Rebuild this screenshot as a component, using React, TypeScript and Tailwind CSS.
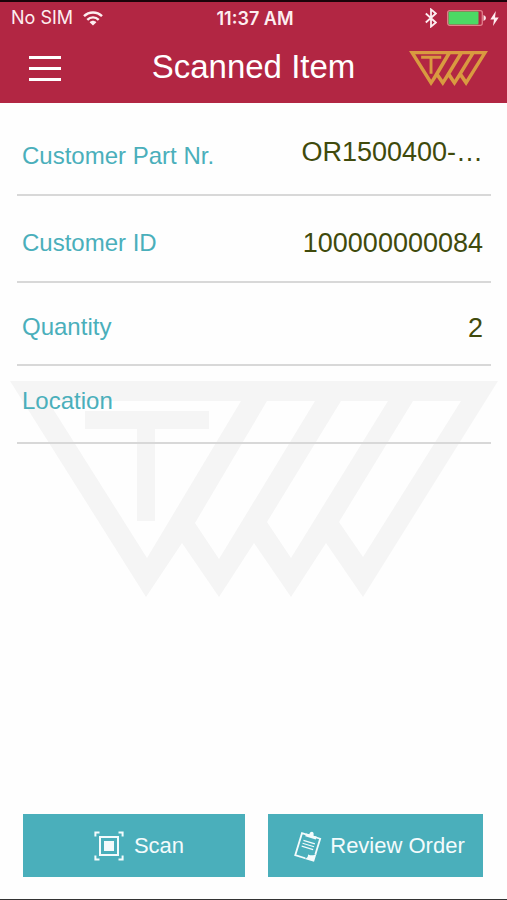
import React, { useState } from 'react';

interface LogoProps {
  className?: string;
}

const Logo: React.FC<LogoProps> = ({ className }) => (
  <svg viewBox="0 0 488 216" className={className} fill="currentColor" aria-hidden="true">
    <path
      fillRule="evenodd"
      d="M0 0H488L353 216L316 162L281 216L244 162L209 216L172 162L136 216Z
         M38 20L137 177L231 20Z
         M257 20L185 142L209 178L305 20Z
         M331 20L257 141L281 177L378 20Z
         M403 20L329 141L353 176L451 20Z"
    />
    <path d="M75 30H199V48H145V140H127V48H75Z" />
  </svg>
);

const WifiIcon = () => (
  <svg viewBox="0 0 20 15" className="h-[15px] w-5" fill="none" stroke="currentColor" strokeWidth="2.4" aria-hidden="true">
    <path d="M1 5.2C6 .2 14 .2 19 5.2" />
    <path d="M4.3 8.8C7.5 5.6 12.5 5.6 15.7 8.8" />
    <path d="M6.6 11.2C8.6 9.2 11.4 9.2 13.4 11.2L10 14.6Z" fill="currentColor" stroke="none" />
  </svg>
);

const BluetoothIcon = () => (
  <svg viewBox="0 0 12 20" className="h-5 w-3" fill="none" stroke="currentColor" strokeWidth="1.8" aria-hidden="true">
    <path d="M.8 5.5L10.8 14.5L6 18.6V1.4L10.8 5.5L.8 14.5" />
  </svg>
);

const BatteryIcon = () => (
  <svg viewBox="0 0 39 16" className="h-4 w-[39px]" aria-hidden="true">
    <rect x=".7" y=".7" width="34.6" height="14.6" rx="2" fill="none" stroke="#e27f8d" strokeWidth="1.3" />
    <rect x="1.5" y="1.5" width="30" height="13" rx="1" fill="#4cd964" />
    <path d="M36.5 5Q39 6 39 8T36.5 11Z" fill="#fbe4e7" />
  </svg>
);

const BoltIcon = () => (
  <svg viewBox="0 0 9 15" className="h-[15px] w-[9px]" fill="currentColor" aria-hidden="true">
    <path d="M5.8 0L.3 8.4H4L3 15L8.7 6.4H5Z" />
  </svg>
);

const ScanIcon = () => (
  <svg viewBox="0 0 30 30" className="size-[30px]" fill="none" stroke="currentColor" strokeWidth="2" aria-hidden="true">
    <path d="M1.4 5.5V1.4H5.5M24.5 1.4H28.6V5.5M28.6 24.5V28.6H24.5M5.5 28.6H1.4V24.5" />
    <rect x="6" y="6" width="18" height="18" />
    <rect x="10" y="10" width="10" height="10" fill="currentColor" stroke="none" />
  </svg>
);

const ClipboardIcon = () => (
  <svg viewBox="0 0 28 32" className="h-8 w-7" fill="none" stroke="currentColor" strokeWidth="1.8" aria-hidden="true">
    <g transform="rotate(17 14 16)">
      <path d="M15 28.5H4.5V5.5H23.5V22" />
      <path d="M8.5 7.5V4.5H11.8C11.8 .2 16.2 .2 16.2 4.5H19.5V7.5Z" fill="currentColor" stroke="none" />
      <path d="M8 12H20M8 15H20M8 18H20" strokeWidth="1.2" />
      <path d="M24.4 21V29.4H13C16 28.5 17.5 27 16.5 24C20 24.5 22.5 23.5 24.4 21Z" fill="currentColor" stroke="none" />
    </g>
  </svg>
);

const details = [
  { label: 'Customer Part Nr.', value: 'OR1500400-…', row: 'h-[93px]', space: 'pb-7' },
  { label: 'Customer ID', value: '100000000084', row: 'h-[87px]', space: 'pb-6' },
];

const App = () => {
  const [quantity, setQuantity] = useState('2');
  const [location, setLocation] = useState('');

  return (
    <div className="flex min-h-screen flex-col border-t-2 border-b border-t-[#1b0309] border-b-[#333333] bg-[#fefefe] font-['Liberation_Sans',Arial,sans-serif]">
      <header className="bg-[#b22643] text-white">
        {/* Status bar */}
        <div className="grid h-8 grid-cols-[1fr_auto_1fr] items-center pr-2 pl-[11px] font-['Inter','Liberation_Sans',sans-serif] text-lg text-[#fdeef0]">
          <div className="flex items-center gap-2.5">
            <span>No SIM</span>
            <WifiIcon />
          </div>
          <span className="pt-px font-semibold">11:37 AM</span>
          <div className="flex items-center justify-end">
            <BluetoothIcon />
            <span className="ml-2.5"><BatteryIcon /></span>
            <span className="ml-1"><BoltIcon /></span>
          </div>
        </div>

        {/* Title bar */}
        <div className="grid h-[69px] grid-cols-[1fr_auto_1fr] items-center px-[19px]">
          <button type="button" aria-label="Menu" className="ml-2.5 flex w-8 flex-col gap-2">
            <span className="h-[3px] bg-white" />
            <span className="h-[3px] bg-white" />
            <span className="h-[3px] bg-white" />
          </button>
          <h1 className="pb-1 text-[33px] leading-9">Scanned Item</h1>
          <Logo className="w-[79px] justify-self-end text-[#d99a40]" />
        </div>
      </header>

      <main className="relative flex-1 pr-4 pl-[17px]">
        <Logo className="absolute top-[278px] right-[9px] left-[10px] text-[#f5f5f5]" />

        <div className="relative text-2xl leading-7 text-[#4aafbb]">
          <dl>
            {details.map(item => (
              <div key={item.label} className={`flex items-end justify-between border-b-2 border-[#d8d8d8] pr-2 pl-[5px] ${item.row}`}>
                <dt className="pb-6">{item.label}</dt>
                <dd className={`text-[27px] text-[#404a0c] ${item.space}`}>{item.value}</dd>
              </div>
            ))}
          </dl>
          <div className="flex h-[83px] items-end justify-between border-b-2 border-[#d8d8d8] pr-2 pl-[5px]">
            <label htmlFor="quantity" className="pb-[23px]">Quantity</label>
            <input
              id="quantity"
              value={quantity}
              onChange={e => setQuantity(e.target.value)}
              className="mb-[22px] h-7 w-40 bg-transparent text-right text-[27px] text-[#404a0c] outline-none"
            />
          </div>
          <div className="flex h-[78px] items-end justify-between border-b-2 border-[#d8d8d8] pr-2 pl-[5px]">
            <label htmlFor="location" className="pb-[27px]">Location</label>
            <input
              id="location"
              value={location}
              onChange={e => setLocation(e.target.value)}
              className="mb-[22px] h-7 w-40 bg-transparent text-right text-[27px] text-[#404a0c] outline-none"
            />
          </div>
        </div>
      </main>

      {/* Actions */}
      <footer className="grid grid-cols-[222fr_215fr] gap-[23px] pr-6 pb-[22px] pl-[23px] text-[22px] text-[#f4fbfc]">
        <button type="button" className="flex h-[63px] items-center justify-center gap-2.5 bg-[#4aafbb] pl-2.5">
          <ScanIcon />
          Scan
        </button>
        <button type="button" className="flex h-[63px] items-center justify-center gap-2 bg-[#4aafbb] pl-2 whitespace-nowrap">
          <ClipboardIcon />
          Review Order
        </button>
      </footer>
    </div>
  );
};

export default App;
